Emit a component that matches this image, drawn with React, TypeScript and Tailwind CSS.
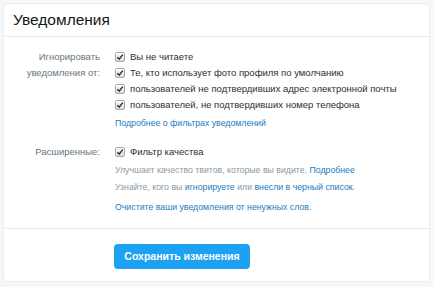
function Check() {
  return (
    <span className="flex h-[10px] w-[10px] shrink-0 items-center justify-center rounded-[2px] border border-[#a9a9a9] bg-gradient-to-b from-[#fcfcfc] to-[#dcdcdc]">
      <svg width="8" height="8" viewBox="0 0 9 9">
        <path d="M1.5 4.8 L3.6 6.9 L7.6 1.8" fill="none" stroke="#333" strokeWidth="1.7" />
      </svg>
    </span>
  );
}

function CheckRow({ text }: { text: string }) {
  return (
    <div className="flex h-4 items-center gap-[5px] whitespace-nowrap text-[9.5px] text-[#292f33]">
      <Check />
      <span>{text}</span>
    </div>
  );
}

export default function App() {
  return (
    <div className="min-h-[287px] bg-[#f5f8fa] pl-[3px] pt-[3px] font-['Liberation_Sans',Arial,sans-serif]">
      <div className="w-[427px] rounded-[4px] border border-[#e6ecf0] bg-white">
        <div className="flex h-[33px] items-center border-b border-[#e6ecf0] px-[9px] text-[15.5px] text-[#14171a]">
          Уведомления
        </div>

        <div className="flex pt-[12px]">
          <div className="w-[96px] text-right text-[9.5px] leading-4 text-[#66757f]">
            Игнорировать
            <br />
            уведомления от:
          </div>
          <div className="ml-[15px] flex flex-col">
            <CheckRow text="Вы не читаете" />
            <CheckRow text="Те, кто использует фото профиля по умолчанию" />
            <CheckRow text="пользователей не подтвердивших адрес электронной почты" />
            <CheckRow text="пользователей, не подтвердивших номер телефона" />
            <a className="mt-[2px] h-4 text-[8.75px] leading-4 text-[#1b7bbf]">
              Подробнее о фильтрах уведомлений
            </a>
          </div>
        </div>

        <div className="flex pt-[13px]">
          <div className="w-[96px] text-right text-[9.5px] leading-4 text-[#66757f]">Расширенные:</div>
          <div className="ml-[15px] flex flex-col whitespace-nowrap text-[8.75px] text-[#8899a6]">
            <CheckRow text="Фильтр качества" />
            <div className="mt-[2px] leading-4">
              Улучшает качество твитов, которые вы видите. <a className="text-[#1b7bbf]">Подробнее</a>
            </div>
            <div className="mt-[1px] leading-4">
              Узнайте, кого вы <a className="text-[#1b7bbf]">игнорируете</a> или{" "}
              <a className="text-[#1b7bbf]">внесли в черный список</a>.
            </div>
            <a className="mt-[4px] leading-4 text-[#1b7bbf]">Очистите ваши уведомления от ненужных слов.</a>
          </div>
        </div>

        <div className="mt-[13px] border-t border-[#e6ecf0] pb-[12px] pl-[110px] pt-[14px]">
          <button className="h-[25px] w-[136px] whitespace-nowrap rounded-[4px] bg-[#1da1f2] text-[10.5px] font-bold text-white">
            Сохранить изменения
          </button>
        </div>
      </div>
    </div>
  );
}
